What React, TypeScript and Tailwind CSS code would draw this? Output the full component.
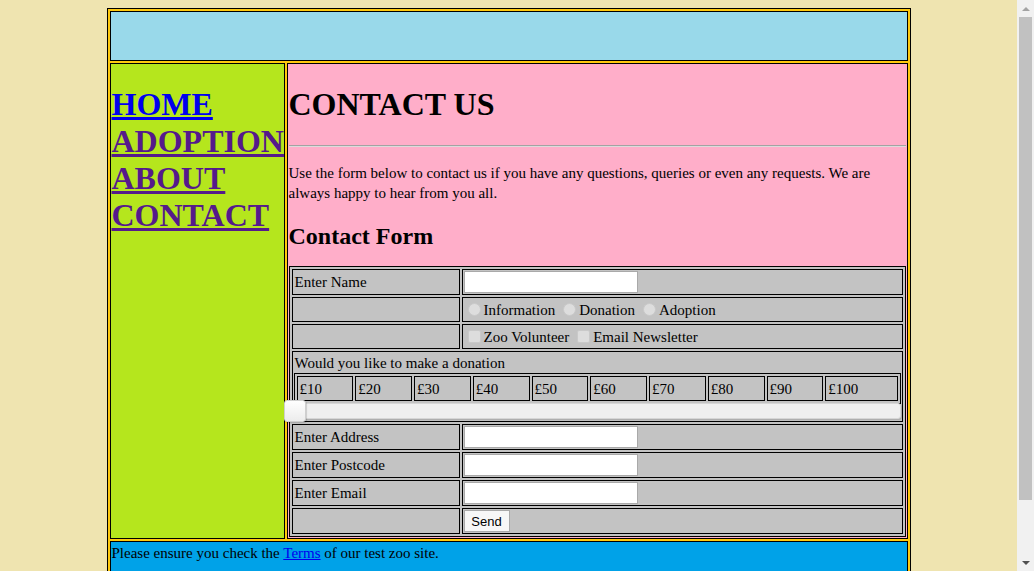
const amounts = ['£10', '£20', '£30', '£40', '£50', '£60', '£70', '£80', '£90', '£100'];

function Radio() {
  return <span className="ml-[4px] mr-[3px] inline-block h-[13px] w-[13px] shrink-0 rounded-full border border-[#c9c9c9] bg-[#dddddd]" />;
}

function Checkbox() {
  return <span className="ml-[4px] mr-[3px] inline-block h-[13px] w-[13px] shrink-0 rounded-[2px] border border-[#c9c9c9] bg-[#dddddd]" />;
}

function TextBox() {
  return <span className="block h-[22px] w-[174px] border border-[#a9a9a9] bg-white" />;
}

function FieldRow({ label, children, tall = true }: { label?: string; children: React.ReactNode; tall?: boolean }) {
  return (
    <tr>
      <td className="w-[168px] border border-black p-px align-middle">
        <div className={`flex items-center pl-[1px] ${tall ? 'h-[22px]' : 'h-[21px]'}`}>{label}</div>
      </td>
      <td className="border border-black p-px align-middle">
        <div className={`flex items-center ${tall ? 'h-[22px]' : 'h-[21px]'}`}>{children}</div>
      </td>
    </tr>
  );
}

// window scrollbar as it shows in the reference
function ScrollBar() {
  return (
    <aside className="sticky top-0 flex h-screen w-[17px] shrink-0 flex-col self-start bg-[#f1f1f1]">
      <div className="flex h-[17px] items-center justify-center">
        <span className="h-0 w-0 border-x-[4px] border-b-[4px] border-x-transparent border-b-[#a3a3a3]" />
      </div>
      <div className="mx-[2px] h-[483px] bg-[#c1c1c1]" />
      <div className="flex-1" />
      <div className="flex h-[17px] items-center justify-center">
        <span className="h-0 w-0 border-x-[4px] border-t-[4px] border-x-transparent border-t-[#505050]" />
      </div>
    </aside>
  );
}

export default function App() {
  return (
    <div className="flex bg-[#efe4b0] font-['Liberation_Serif',serif] text-[15px] leading-[20px] text-black">
      <div className="min-h-screen min-w-0 flex-1 p-2">
        <div className="mx-auto flex w-[804px] flex-col gap-[2px] border border-black bg-[#ffc90e] p-[2px]">
          {/* banner */}
          <div className="h-[50px] border border-black bg-[#99d9ea]" />

          <div className="flex gap-[2px]">
            {/* side nav */}
            <nav className="w-[175px] shrink-0 border border-black bg-[#b5e61d] p-px">
              <h1 className="mt-[21px] whitespace-nowrap text-[32px] font-bold leading-[37px]">
                <a href="#" className="text-[#0000ee] underline">HOME</a>
                <br />
                <a href="#" className="text-[#551a8b] underline">ADOPTION</a>
                <br />
                <a href="#" className="text-[#551a8b] underline">ABOUT</a>
                <br />
                <a href="#" className="text-[#551a8b] underline">CONTACT</a>
              </h1>
            </nav>

            {/* main content */}
            <main className="min-w-0 flex-1 border border-black bg-[#ffaec9] p-px">
              <h1 className="mt-[21px] mb-[22px] text-[32px] font-bold leading-[37px]">CONTACT US</h1>
              <div className="border-t border-b border-t-[#a3a3a3] border-b-[#dcdcdc]" />
              <p className="mt-[16px]">
                Use the form below to contact us if you have any questions, queries or even any requests. We are always
                happy to hear from you all.
              </p>
              <h2 className="mt-[20px] mb-[16px] text-[24px] font-bold leading-[27px]">Contact Form</h2>

              <table className="w-full border-separate border-spacing-[2px] border border-black bg-[#c3c3c3]">
                <tbody>
                  <FieldRow label="Enter Name">
                    <TextBox />
                  </FieldRow>
                  <FieldRow tall={false}>
                    <Radio />
                    <span className="mr-[4px]">Information</span>
                    <Radio />
                    <span className="mr-[4px]">Donation</span>
                    <Radio />
                    <span>Adoption</span>
                  </FieldRow>
                  <FieldRow tall={false}>
                    <Checkbox />
                    <span className="mr-[4px]">Zoo Volunteer</span>
                    <Checkbox />
                    <span>Email Newsletter</span>
                  </FieldRow>
                  <tr>
                    <td colSpan={2} className="border border-black p-px">
                      <div className="pl-[1px]">Would you like to make a donation</div>
                      <table className="w-full border-separate border-spacing-[2px] border border-black">
                        <tbody>
                          <tr>
                            {amounts.map((a) => (
                              <td key={a} className="border border-black p-px">
                                <div className="flex h-[21px] items-center pl-[1px]">{a}</div>
                              </td>
                            ))}
                          </tr>
                        </tbody>
                      </table>
                      {/* donation slider */}
                      <div className="relative -mt-[4px] -mb-[2px] -ml-[10px] flex h-[22px] w-[617px] items-center">
                        <div className="h-[16px] w-full rounded-[3px] border border-[#d6d6d6] bg-[#efefef] shadow-[1px_1px_1px_rgba(0,0,0,0.12)]" />
                        <div className="absolute top-0 left-0 h-[22px] w-[22px] rounded-[3px] border border-[#cfcfcf] bg-linear-to-b from-white to-[#ececec] shadow-[1px_1px_1px_rgba(0,0,0,0.15)]" />
                      </div>
                    </td>
                  </tr>
                  <FieldRow label="Enter Address">
                    <TextBox />
                  </FieldRow>
                  <FieldRow label="Enter Postcode">
                    <TextBox />
                  </FieldRow>
                  <FieldRow label="Enter Email">
                    <TextBox />
                  </FieldRow>
                  <FieldRow>
                    <button className="h-[22px] w-[46px] border border-[#a9a9a9] bg-[#f7f7f7] font-['Liberation_Sans',sans-serif] text-[13px] leading-none">
                      Send
                    </button>
                  </FieldRow>
                </tbody>
              </table>
            </main>
          </div>

          {/* footer */}
          <footer className="h-[84px] border border-black bg-[#00a2e8] p-px">
            Please ensure you check the{' '}
            <a href="#" className="text-[#0000ee] underline">
              Terms
            </a>{' '}
            of our test zoo site.
          </footer>
        </div>
      </div>
      <ScrollBar />
    </div>
  );
}
